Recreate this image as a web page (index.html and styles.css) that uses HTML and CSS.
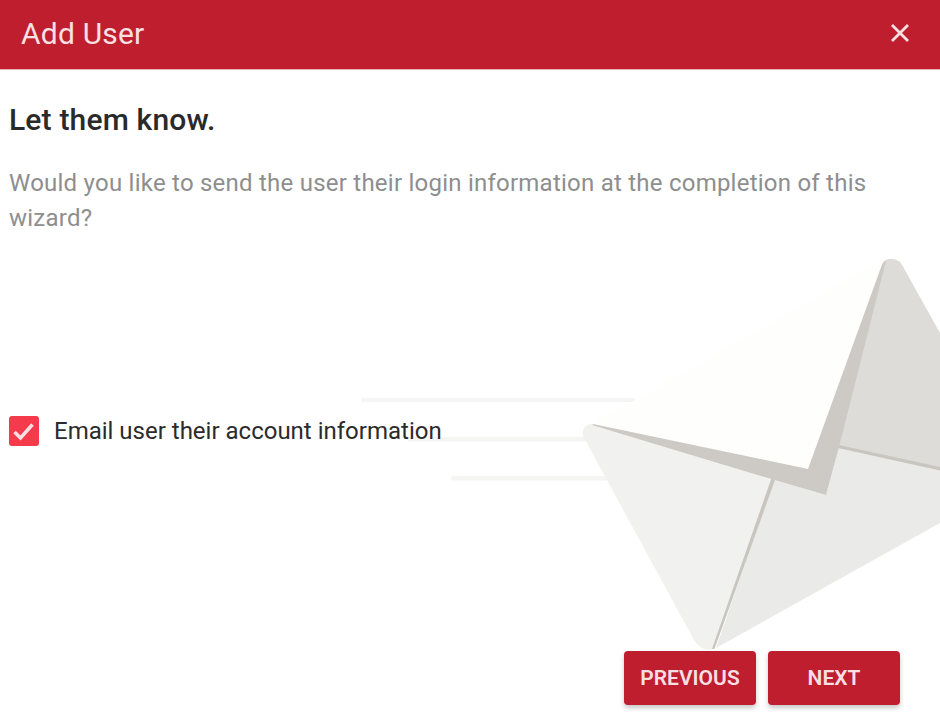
FILE: index.html
```html
<!DOCTYPE html>
<html lang="en">
<head>
<meta charset="utf-8">
<title>Add User</title>
<link rel="stylesheet" href="styles.css">
</head>
<body>
<div class="dialog">
  <svg class="art" width="940" height="716" viewBox="0 0 940 716" aria-hidden="true">
    <rect class="speed" x="361" y="398" width="275" height="4" rx="2"/>
    <rect class="speed" x="407" y="437" width="182" height="4.500" rx="2"/>
    <rect class="speed" x="451" y="476" width="160" height="4.500" rx="2"/>
    <path class="back" d="M884 261 Q892 256 900 262 Q903 266 906 272 L940 333 L940 480 L830 450 Z"/>
    <path class="right" d="M716 648 L940 523 L940 470 L839 446 L826 495 L774 480 Z"/>
    <path class="seam" d="M839 445 L940 467 L940 470.500 L838 448 Z"/>
    <path class="left" d="M592 424 Q581 425 583 436 L694 640 Q701 652 713 649 L773 480 Z"/>
    <path class="seam" d="M771.500 478 L775 480 L714.500 649 L712 649 Z"/>
    <path class="shadow" d="M592 425 L886 261 L839 447 L826 495 L771 479 Z"/>
    <path class="flap" d="M593 424 L884 259 L808 469 Z"/>
  </svg>
  <header class="bar">
    <h1 class="title">Add User</h1>
    <button class="close" type="button" aria-label="Close">
      <svg width="20" height="20" viewBox="0 0 20 20"><path d="M2 2 L18 18 M18 2 L2 18"/></svg>
    </button>
  </header>
  <main class="body">
    <h2 class="heading">Let them know.</h2>
    <p class="lead">Would you like to send the user their login information at the completion of this wizard?</p>
    <label class="check">
      <span class="box"><svg width="30" height="30" viewBox="0 0 30 30"><path d="M5.500 16 L11.500 22 L23.500 8.500"/></svg></span>
      <span class="check-text">Email user their account information</span>
    </label>
    <div class="actions">
      <button class="btn" type="button">PREVIOUS</button>
      <button class="btn" type="button">NEXT</button>
    </div>
  </main>
</div>
</body>
</html>
```
FILE: styles.css
```css
* { box-sizing: border-box; }
html, body { margin: 0; height: 716px; overflow: hidden; background: #fff; }
body { font-family: Roboto, "Liberation Sans", sans-serif; }
.dialog { position: relative; width: 940px; height: 716px; display: flex; flex-direction: column; }
.art { position: absolute; left: 0; top: 0; }
.speed { fill: #f5f5f3; }
.back { fill: #dddcd9; }
.right { fill: #eaeae8; }
.left { fill: #f1f1ef; }
.seam { fill: #c9c6c0; }
.shadow { fill: #cdcac5; }
.flap { fill: #fefefc; }
.bar { position: relative; height: 69px; background: #be1e2d; display: flex; align-items: center; justify-content: space-between; padding: 0 30px 2px 21px; flex: none; box-shadow: 0 1px 0 rgba(190,30,45,.35); }
.title { margin: 0; font-size: 30px; font-weight: 400; letter-spacing: .2px; color: #f9e0e3; }
.close { background: none; border: 0; padding: 0; width: 20px; height: 20px; display: flex; margin-bottom: 2px; }
.close path { stroke: #f9e0e3; stroke-width: 2.800; fill: none; }
.body { position: relative; flex: 1; display: flex; flex-direction: column; padding: 0 40px 11px 9px; }
.heading { margin: 32px 0 0; font-size: 30px; line-height: 38px; font-weight: 500; letter-spacing: .17px; color: #2a2a2a; }
.lead { margin: 27px 0 0; font-size: 24px; line-height: 35px; font-weight: 400; letter-spacing: .235px; color: #8e8e8e; width: 880px; }
.check { display: flex; align-items: center; gap: 15px; margin-top: 180px; }
.box { width: 30px; height: 30px; border-radius: 3px; background: #f43a4b; display: block; }
.box svg { display: block; }
.box path { stroke: #fbdfe2; stroke-width: 3.500; fill: none; }
.check-text { font-size: 24px; color: #2b2b2b; }
.actions { margin-top: auto; display: flex; justify-content: flex-end; gap: 12px; }
.btn { width: 132px; height: 54px; padding: 0; border: 0; border-radius: 4px; background: #be1e2d; color: #f9dfe3; font: 600 21px Roboto, sans-serif; box-shadow: 0 3px 5px rgba(0,0,0,.22); }
```
